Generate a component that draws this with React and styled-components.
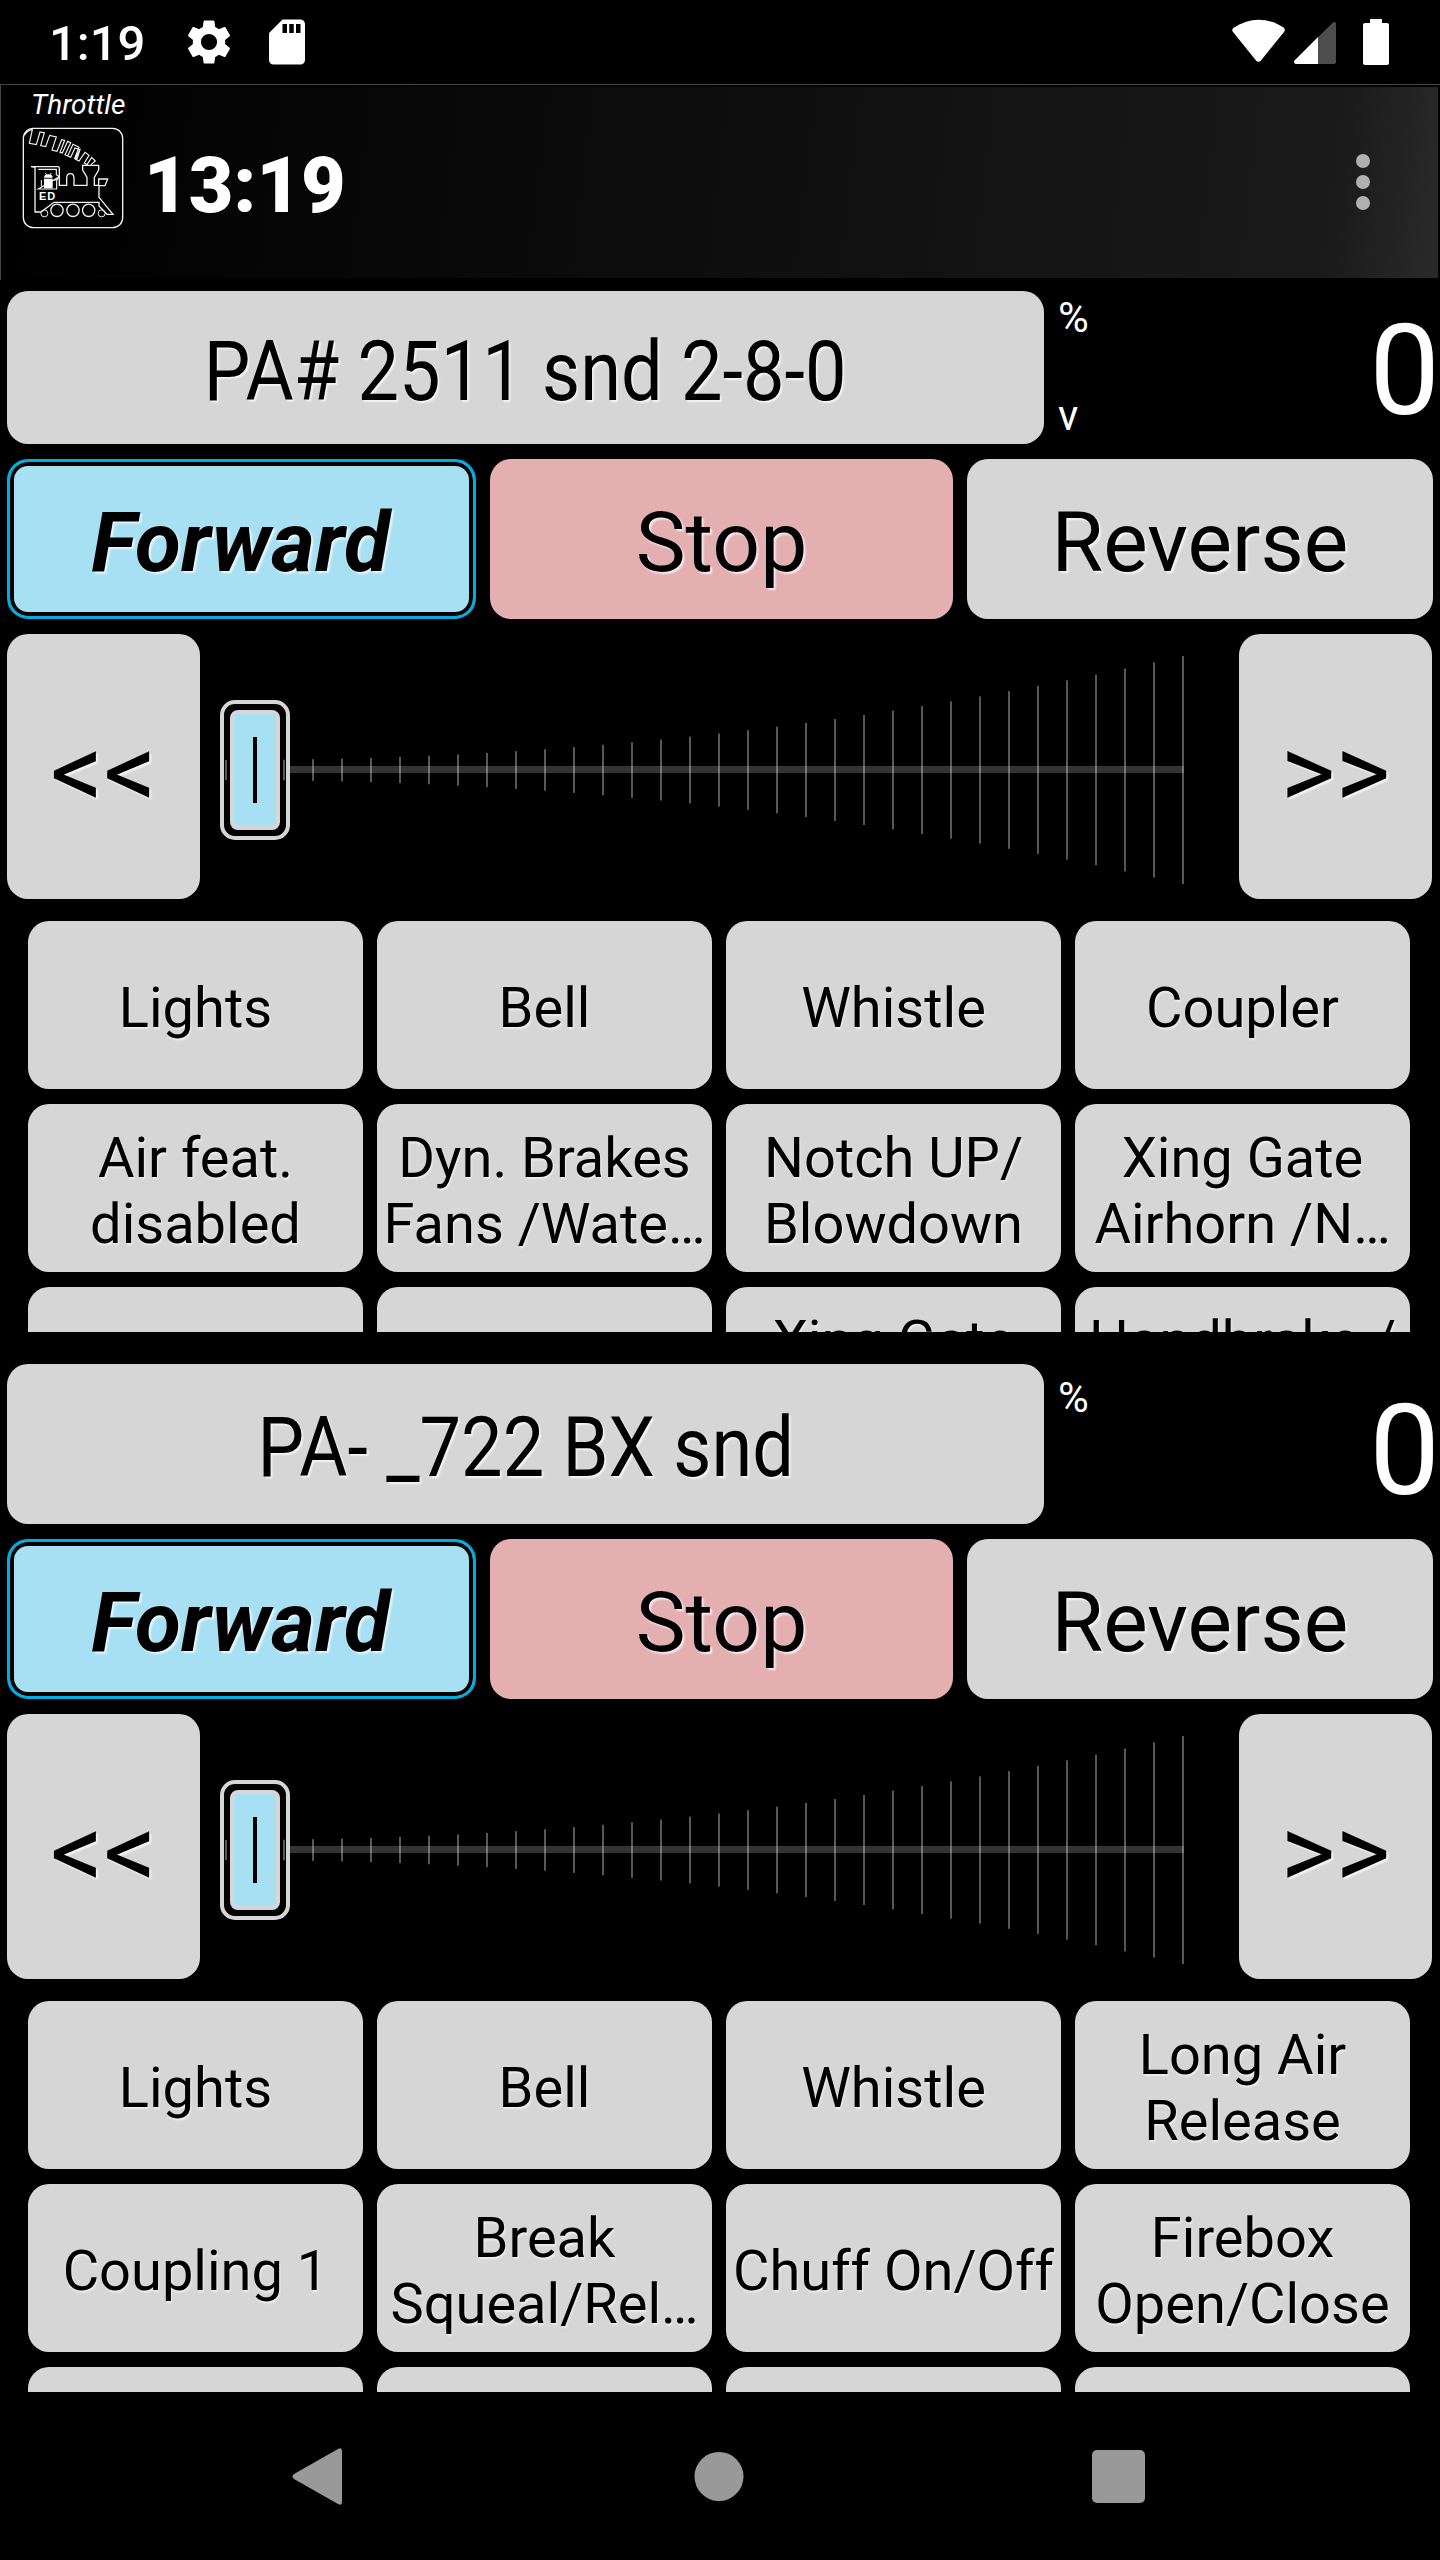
import React from "react";
import styled, { createGlobalStyle, css } from "styled-components";

const Global = createGlobalStyle`
  * { box-sizing: border-box; }
  html, body { margin: 0; background: #000; }
  body { font-family: Roboto, "Liberation Sans", sans-serif; }
`;

const GREY = "#d6d6d6";
const BLUE = "#a8e0f3";

const Screen = styled.div`
  width: 1440px;
  height: 2560px;
  overflow: hidden;
  display: flex;
  flex-direction: column;
  background: #000;
  color: #fff;
`;

const StatusBar = styled.header`
  height: 84px;
  flex: none;
  display: flex;
  align-items: center;
  justify-content: space-between;
  padding: 0 51px 0 49px;
`;

const StatusGroup = styled.div`
  display: flex;
  align-items: center;
  gap: ${(p) => p.$gap}px;
`;

const StatusClock = styled.span`
  font-size: 49px;
  font-weight: 500;
  line-height: 58px;
  width: 102px;
  margin-right: 7px;
  padding-top: 3px;
`;

const TitleBar = styled.div`
  height: 196px;
  flex: none;
  display: flex;
  justify-content: space-between;
  padding: 0 70px 0 0;
  border-top: 1px solid #444;
  border-left: 1px solid #444;
  background: linear-gradient(97deg, #000 0%, #030303 12%, #171717 82%, #1a1a1a 92%, #2a2a2a 100%) 0 2px / 1437px 191px no-repeat;
`;

const Brand = styled.div`
  display: flex;
  flex-direction: column;
  padding: 2px 0 0 21px;
`;

const ScreenName = styled.span`
  font-size: 28px;
  font-style: italic;
  line-height: 36px;
  height: 40px;
  padding-left: 9px;
`;

const BrandRow = styled.div`
  display: flex;
  align-items: flex-start;
  gap: 20px;
`;

const TitleClock = styled.span`
  font-size: 77px;
  font-weight: 900;
  line-height: 90px;
  padding-top: 14px;
`;

const Panel = styled.section`
  flex: none;
  display: flex;
  flex-direction: column;
  height: ${(p) => p.$height}px;
  padding: ${(p) => p.$top}px 7px 0;
  overflow: hidden;
`;

const Button = styled.button`
  font: 400 84px/98px Roboto, "Liberation Sans", sans-serif;
  color: #000;
  background: ${GREY};
  border: 0;
  border-radius: 21px;
  padding: 8px 0 0;
  display: flex;
  align-items: center;
  justify-content: center;
  text-shadow: 2px 2px 2px rgba(255, 255, 255, 0.75);
`;

const LocoRow = styled.div`
  flex: none;
  display: flex;
  height: ${(p) => p.$height}px;
  margin-right: -7px;
`;

const LocoButton = styled(Button)`
  width: 1037px;
  flex: none;
`;

const LocoName = styled.span`
  white-space: pre;
  transform: scaleX(0.88);
`;

const Readout = styled.div`
  flex: 1;
  display: flex;
  justify-content: space-between;
  padding: ${(p) => p.$shift}px 0 0 14px;
`;

const Units = styled.div`
  display: flex;
  flex-direction: column;
  justify-content: space-between;
  height: 149px;
  padding-top: 2px;
  font-size: 42px;
  line-height: 49px;
`;

const Speed = styled.span`
  font-size: 126px;
  line-height: 148px;
  padding-top: 6px;
`;

const DirectionRow = styled.div`
  flex: none;
  display: grid;
  grid-template-columns: 469px 463px 466px;
  gap: 14px;
  height: 160px;
  margin-top: 15px;
`;

const DirectionButton = styled(Button)`
  ${(p) => p.$tone === "stop" && css`background: #e4afb1;`}
  ${(p) => p.$tone === "active" && css`
    background: ${BLUE};
    border: 3px solid #00ade0;
    box-shadow: inset 0 0 0 4px #000;
    font-weight: 700;
    font-style: italic;
    padding-right: 2px;
  `}
`;

const SpeedRow = styled.div`
  flex: none;
  display: flex;
  height: 265px;
  margin-top: 15px;
`;

const StepButton = styled(Button)`
  width: 193px;
  flex: none;
  font-size: 105px;
  padding-top: 12px;
`;

const Slider = styled.svg`
  width: 1039px;
  height: 265px;
  flex: none;
`;

const FunctionGrid = styled.div`
  flex: none;
  display: grid;
  grid-template-columns: repeat(4, 335px);
  grid-auto-rows: 168px;
  gap: 15px 14px;
  margin-top: 22px;
  padding-left: 21px;
`;

const FunctionButton = styled(Button)`
  font-size: 56px;
  line-height: 66px;
  padding: 5px 0 0;
  text-shadow: 1px 2px 2px rgba(255, 255, 255, 0.6);
`;

const FunctionLabel = styled.span`
  white-space: pre;
  text-align: center;
`;

const NavBar = styled.nav`
  flex: none;
  height: 168px;
  display: flex;
  align-items: center;
  padding: 0 295px 0 292px;
  justify-content: space-between;
`;

const SettingsIcon = () => (
  <svg width="54" height="54" viewBox="0 0 24 24" fill="#fff">
    <path d="M19.14 12.94c.04-.3.06-.61.06-.94 0-.32-.02-.64-.07-.94l2.03-1.58c.18-.14.23-.41.12-.61l-1.92-3.32c-.12-.22-.37-.29-.59-.22l-2.39.96c-.5-.38-1.03-.7-1.62-.94l-.36-2.54c-.04-.24-.24-.41-.48-.41h-3.84c-.24 0-.43.17-.47.41l-.36 2.54c-.59.24-1.13.57-1.62.94l-2.39-.96c-.22-.08-.47 0-.59.22L2.74 8.87c-.12.21-.08.47.12.61l2.03 1.58c-.05.3-.09.63-.09.94s.02.64.07.94l-2.03 1.58c-.18.14-.23.41-.12.61l1.92 3.32c.12.22.37.29.59.22l2.39-.96c.5.38 1.03.7 1.62.94l.36 2.54c.05.24.24.41.48.41h3.84c.24 0 .44-.17.47-.41l.36-2.54c.59-.24 1.13-.56 1.62-.94l2.39.96c.22.08.47 0 .59-.22l1.92-3.32c.12-.22.07-.47-.12-.61l-2.01-1.58zM12 15.6A3.6 3.6 0 1 1 12 8.4a3.6 3.6 0 0 1 0 7.2z" />
  </svg>
);

const SdCardIcon = () => (
  <svg width="54" height="54" viewBox="0 0 24 24" fill="#fff">
    <path d="M18 2h-8L4.02 8 4 20c0 1.1.9 2 2 2h12c1.1 0 2-.9 2-2V4c0-1.1-.9-2-2-2zm-6 6h-2V4h2v4zm3 0h-2V4h2v4zm3 0h-2V4h2v4z" />
  </svg>
);

const SignalIcons = () => (
  <svg width="158" height="50" viewBox="1231 17 158 50">
    <path d="M1233 32 Q1231 29.500 1234 27.500 C1250 17 1267 17 1283.500 27.500 Q1286 29.500 1284 32 L1261 60.500 Q1258.500 63 1256 60.500 Z" fill="#fff" />
    <path d="M1333 22.500 Q1336 21 1336 24 V62 Q1336 64 1334 64 H1318 V37 Z" fill="#4d4d4d" />
    <path d="M1318 37 V64 H1296 Q1293 63.500 1294.500 60.500 Z" fill="#fff" />
    <path d="M1370 19 H1382 V23 H1387 Q1389 23 1389 25 V63 Q1389 65 1387 65 H1365 Q1363 65 1363 63 V25 Q1363 23 1365 23 H1370 Z" fill="#fff" />
  </svg>
);

const Logo = () => (
  <svg width="102" height="102" viewBox="67 141 306 306" fill="none" stroke="#f2f2f2" strokeWidth="4">
    <rect x="71" y="145" width="298" height="298" rx="30" />
    <path strokeWidth="3.500" d="M74 166 Q84 150 98 149 L89 190 L110 194 L121 156 L134 158 L123 197 L138 200 L150 166 L170 171 L157 210 L172 214 L186 179 L195 181 L181 217 L188 219 L204 184 L213 188 L196 224 L204 228 L220 193 L238 202 L225 235 L232 238 L242 206 M204 228 L213 232 L226 204 L240 209 L227 238 L238 243 L256 217 L268 226 L254 249 L262 254 L276 232 L287 243 L274 254" />
    <path d="M106 393 V262 L94 260 H174 Q179 260 179 266 V316 H201 V295 Q201 281 212 281 Q223 281 223 295 V316 H262 V292 L249 270 V256 H297 V270 L284 292 V316 H297 V297 H324 L316 317 H298 V352 L340 403 H322 L298 378 V367 H163 L124 396 H106 Z" />
    <path d="M116 268 H170 V284 L179 290 L164 302 M179 290 L171 301 V327 H116 Z" strokeWidth="3.500" />
    <rect x="133" y="296" width="26" height="29" fill="#fff" stroke="none" />
    <path d="M133 293 Q134 283 146 283 Q158 283 159 293 Z" fill="#fff" stroke="none" />
    <path d="M137 279 L141 285 M155 279 L151 285 M125 300 V319" strokeWidth="3" />
    <circle cx="172" cy="391" r="18.500" />
    <circle cx="220" cy="391" r="18.500" />
    <circle cx="267" cy="391" r="18.500" />
    <circle cx="134" cy="400" r="10.500" strokeWidth="3" />
    <circle cx="306" cy="400" r="10.500" strokeWidth="3" />
    <text x="118" y="359" fill="#fff" stroke="none" fontFamily="Liberation Sans, sans-serif" fontWeight="700" fontSize="33" textLength="49">ED</text>
  </svg>
);

const MenuDots = () => (
  <svg width="14" height="196" viewBox="0 84 14 196" fill="#b0b0b0">
    <circle cx="7" cy="160" r="7" />
    <circle cx="7" cy="181" r="7" />
    <circle cx="7" cy="202" r="7" />
  </svg>
);

const TICKS = Array.from({ length: 34 }, (_, i) => ({
  x: 25 + i * 29,
  h: 20 + 208 * Math.pow(i / 33, 2.06),
}));

const SpeedSlider = () => (
  <Slider viewBox="0 0 1039 265">
    <rect x="90" y="132" width="894" height="7" fill="#333" />
    <rect x="22" y="68" width="66" height="136" rx="13" fill="#000" stroke={GREY} strokeWidth="4" />
    {TICKS.map((t) => (
      <rect key={t.x} x={t.x} y={136 - t.h / 2} width="2" height={t.h} fill="#fff" opacity="0.34" />
    ))}
    <rect x="32" y="78" width="46" height="116" rx="6" fill={BLUE} stroke={GREY} strokeWidth="4" />
    <rect x="53" y="103" width="4" height="66" fill="#000" />
  </Slider>
);

const THROTTLES = [
  {
    name: "PA# 2511 snd 2-8-0",
    units: ["%", "v"],
    top: 11, height: 1052, loco: 153, shift: 0,
    functions: ["Lights", "Bell", "Whistle", "Coupler", "Air feat.\ndisabled", "Dyn. Brakes\nFans /Wate…", "Notch UP/\nBlowdown", "Xing Gate\nAirhorn /N…", "", "", "Xing Gate\n ", "Handbrake /\n "],
  },
  {
    name: "PA- _722 BX snd",
    units: ["%"],
    top: 32, height: 1060, loco: 160, shift: 7,
    functions: ["Lights", "Bell", "Whistle", "Long Air\nRelease", "Coupling 1", "Break\nSqueal/Rel…", "Chuff On/Off", "Firebox\nOpen/Close", "", "", "", ""],
  },
];

const Throttle = ({ data }) => (
  <Panel $height={data.height} $top={data.top}>
    <LocoRow $height={data.loco}>
      <LocoButton><LocoName>{data.name}</LocoName></LocoButton>
      <Readout $shift={data.shift}>
        <Units>{data.units.map((u) => <span key={u}>{u}</span>)}</Units>
        <Speed>0</Speed>
      </Readout>
    </LocoRow>
    <DirectionRow>
      <DirectionButton $tone="active">Forward</DirectionButton>
      <DirectionButton $tone="stop">Stop</DirectionButton>
      <DirectionButton>Reverse</DirectionButton>
    </DirectionRow>
    <SpeedRow>
      <StepButton>{"<<"}</StepButton>
      <SpeedSlider />
      <StepButton>{">>"}</StepButton>
    </SpeedRow>
    <FunctionGrid>
      {data.functions.map((f, i) => (
        <FunctionButton key={i}><FunctionLabel>{f}</FunctionLabel></FunctionButton>
      ))}
    </FunctionGrid>
  </Panel>
);

export default function App() {
  return (
    <Screen>
      <Global />
      <StatusBar>
        <StatusGroup $gap={24}>
          <StatusClock>1:19</StatusClock>
          <SettingsIcon />
          <SdCardIcon />
        </StatusGroup>
        <SignalIcons />
      </StatusBar>
      <TitleBar>
        <Brand>
          <ScreenName>Throttle</ScreenName>
          <BrandRow>
            <Logo />
            <TitleClock>13:19</TitleClock>
          </BrandRow>
        </Brand>
        <MenuDots />
      </TitleBar>
      {THROTTLES.map((t) => <Throttle key={t.name} data={t} />)}
      <NavBar>
        <svg width="50" height="57" viewBox="0 0 50 57" fill="#999"><path d="M2 26 L46 1 Q50 -1 50 3 V54 Q50 58 46 56 L2 31 Q-1 28.500 2 26 Z" /></svg>
        <svg width="53" height="49" viewBox="0 0 53 49" fill="#999"><circle cx="28" cy="24.500" r="24.500" /></svg>
        <svg width="53" height="53" viewBox="0 0 53 53" fill="#999"><rect width="53" height="53" rx="5" /></svg>
      </NavBar>
    </Screen>
  );
}
